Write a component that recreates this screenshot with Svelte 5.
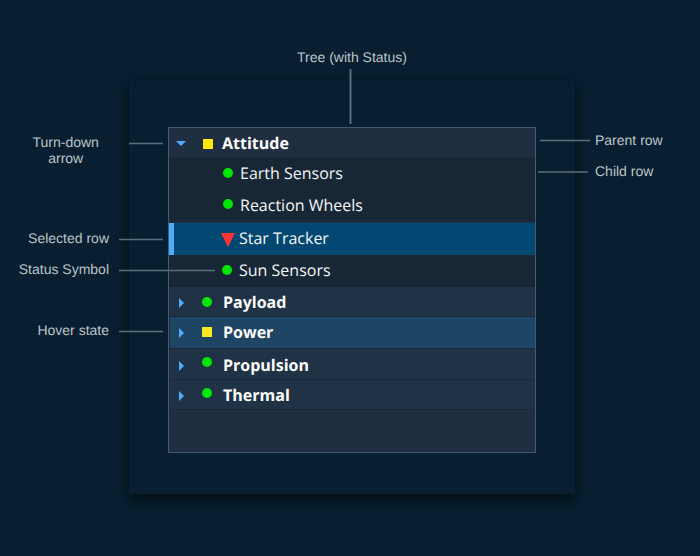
<script>
  // Vertical positions (arrowY, iconY, textY) are relative to the top of each row.
  const rows = [
    { label: 'Attitude', kind: 'parent open', h: 30, arrow: 'down', arrowY: 13, status: 'square', iconX: 34, iconY: 11, textX: 53, textY: 4 },
    { label: 'Earth Sensors', kind: 'child', h: 32, status: 'circle', iconX: 54, iconY: 10, textX: 71, textY: 4 },
    { label: 'Reaction Wheels', kind: 'child edge', h: 33, status: 'circle', iconX: 54, iconY: 9, textX: 71, textY: 4 },
    { label: 'Star Tracker', kind: 'child selected', h: 32, status: 'triangle', iconX: 52, iconY: 10, textX: 70, textY: 4 },
    { label: 'Sun Sensors', kind: 'child', h: 32, status: 'circle', iconX: 53, iconY: 10, textX: 70, textY: 4 },
    { label: 'Payload', kind: 'parent line', h: 30, arrow: 'right', arrowY: 11, status: 'circle', iconX: 33, iconY: 10, textX: 54, textY: 4 },
    { label: 'Power', kind: 'parent line hover', h: 32, arrow: 'right', arrowY: 11, status: 'square', iconX: 33, iconY: 10, textX: 54, textY: 4 },
    { label: 'Propulsion', kind: 'parent line', h: 31, arrow: 'right', arrowY: 12, status: 'circle', iconX: 33, iconY: 8, textX: 54, textY: 5 },
    { label: 'Thermal', kind: 'parent line', h: 30, arrow: 'right', arrowY: 11, status: 'circle', iconX: 33, iconY: 8, textX: 54, textY: 4 }
  ];
</script>

<main>
  <section class="card">
    <div class="tree">
      {#each rows as r}
        <div class="row {r.kind}" style="height:{r.h}px">
          <span class="twist">
            {#if r.arrow === 'down'}
              <svg class="down" width="10" height="5" style="margin-top:{r.arrowY}px"><path d="M0 0H10L5 5Z" /></svg>
            {:else if r.arrow === 'right'}
              <svg class="right" width="5" height="10" style="margin-top:{r.arrowY}px"><path d="M0 0V10L5 5Z" /></svg>
            {/if}
          </span>
          <span class="status" style="width:{r.textX - 20}px;padding-left:{r.iconX - 20}px;padding-top:{r.iconY}px">
            {#if r.status === 'circle'}
              <svg width="10" height="10"><circle cx="5" cy="5" r="5" fill="#00e600" /></svg>
            {:else if r.status === 'square'}
              <svg width="10" height="10"><rect width="10" height="10" fill={r.label === 'Power' ? '#fce81f' : '#fce800'} /></svg>
            {:else}
              <svg width="14" height="14"><path d="M0 0H14L7 14Z" fill="#ff3333" /></svg>
            {/if}
          </span>
          <span class="label" style="margin-top:{r.textY}px">{r.label}</span>
        </div>
      {/each}
    </div>
  </section>

  <span class="note title">Tree (with Status)</span>
  <span class="note turn">Turn-down<br />arrow</span>
  <span class="note selected-note">Selected row</span>
  <span class="note status-note">Status Symbol</span>
  <span class="note hover-note">Hover state</span>
  <span class="note parent-note">Parent row</span>
  <span class="note child-note">Child row</span>

  <svg class="leaders" width="700" height="556" fill="none">
    <path d="M350.5 69V124" stroke-width="2" />
    <path d="M129 143.5H163M119 239.5H163M119 270.5H215M119 331.5H163M540 140.5H590M538 172H588" stroke-width="1.5" />
  </svg>
</main>

<style>
  :global(body) { margin: 0; background: #071f30; }
  main {
    position: relative;
    box-sizing: border-box;
    width: 700px;
    height: 556px;
    padding: 81px 0 0 129px;
    overflow: hidden;
    background: #071f30;
    text-rendering: geometricPrecision;
  }
  .card {
    box-sizing: border-box;
    width: 446px;
    height: 413px;
    padding: 46px 39px;
    background: #071f30;
    box-shadow: 0 5px 12px rgba(0, 8, 8, 0.75);
  }
  .tree {
    box-sizing: border-box;
    width: 368px;
    height: 326px;
    border: 1px solid #465c6c;
    background: #1f2f41;
    font: 16px/22px "Open Sans", "Noto Sans", sans-serif;
    color: #fff;
  }
  .row {
    box-sizing: border-box;
    display: flex;
    align-items: flex-start;
  }
  .parent { background: #203246; font-weight: 700; }
  .open { background: #1f2f41; }
  .child { background: #182735; color: #f4f6f7; }
  .edge { border-bottom: 1px solid #1d3343; }
  .line { border-bottom: 1px solid #172838; box-shadow: inset 1px 0 #1f2f41; }
  .hover { background: #1f4565; }
  .selected { background: #004872; box-shadow: inset 5px 0 #4dacff; }
  .twist { display: flex; width: 20px; flex: none; }
  .twist svg { fill: #4dacff; }
  .down { margin-left: 7px; }
  .right { margin-left: 10px; }
  .status { box-sizing: border-box; display: flex; flex: none; }
  .label { white-space: nowrap; }
  .note {
    position: absolute;
    font: 14px/16px "Liberation Sans", Arial, sans-serif;
    color: #bdc4c9;
    white-space: nowrap;
  }
  .title { left: 297px; top: 49px; }
  .turn { left: 32.5px; top: 134px; text-align: center; }
  .selected-note { right: 591px; top: 230px; }
  .status-note { right: 591px; top: 261px; }
  .hover-note { right: 591px; top: 322px; }
  .parent-note { left: 595px; top: 132px; }
  .child-note { left: 595px; top: 163px; }
  .leaders { position: absolute; left: 0; top: 0; stroke: #5c6f7b; }
</style>
